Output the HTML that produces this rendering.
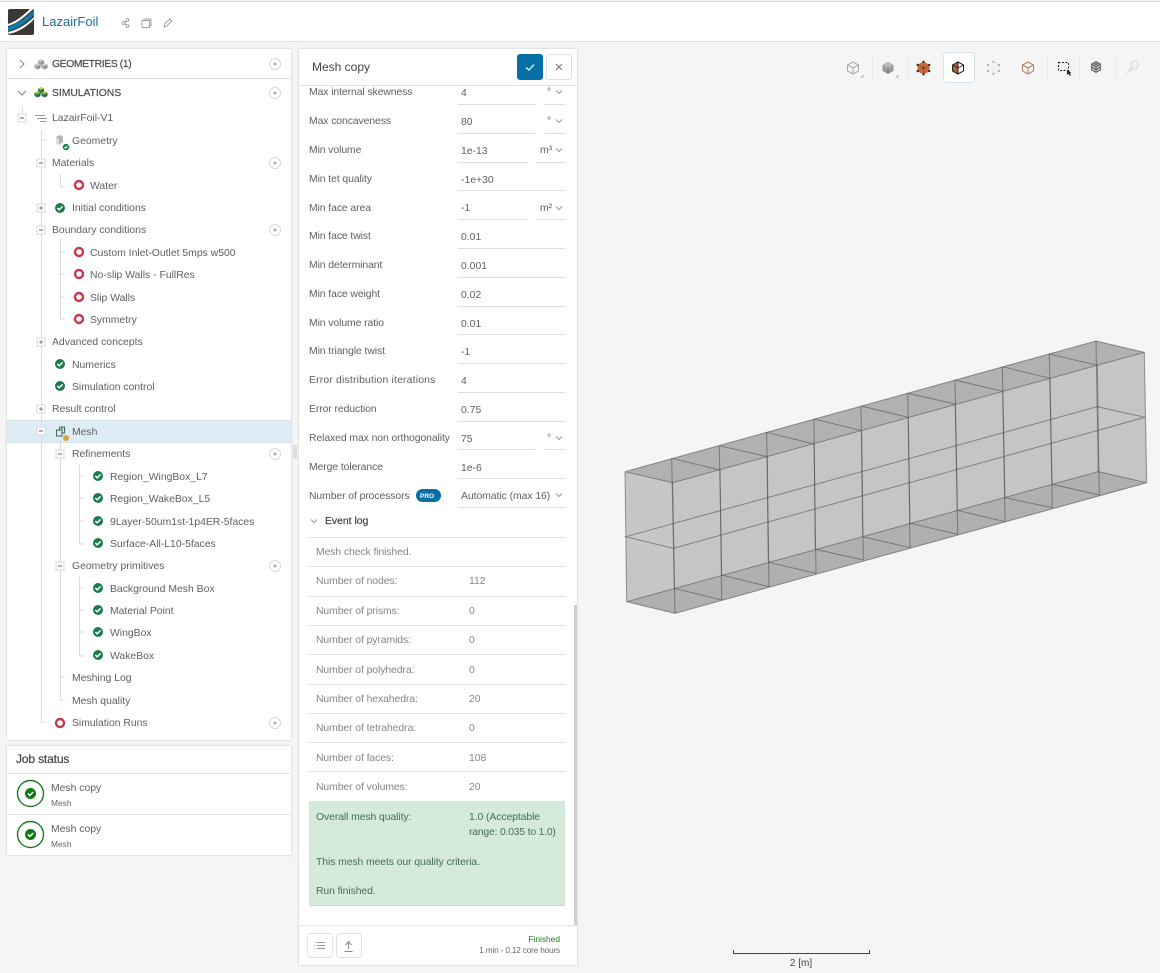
<!DOCTYPE html>
<html><head><meta charset="utf-8"><title>LazairFoil</title>
<style>
html,body{margin:0;padding:0;width:1160px;height:973px;overflow:hidden;background:#f5f5f5;font-family:"Liberation Sans",sans-serif}
.b{position:absolute;background:#fff;box-sizing:border-box}
.p{position:absolute;background:#fff;box-shadow:0 0 2px rgba(0,0,0,.22)}
svg.o{position:absolute;left:0;top:0}
.t{position:absolute;white-space:nowrap;font-size:10.4px;line-height:14px;color:#5f5f5f;margin-top:2px}
.h{font-size:10.4px;color:#4a4a4a;-webkit-text-stroke:.2px #4a4a4a}
.l{color:#5f5f5f;letter-spacing:-.08px}
.v{color:#5f5f5f;left:461px}
.e{color:#858585;left:316px;letter-spacing:-.08px}
.n{color:#858585;left:469px}
.g{color:#436f53;letter-spacing:-.08px}
</style></head><body>
<div class="b" style="left:0;top:1px;width:1160px;height:41px;border-top:1px solid #ddd;border-bottom:1px solid #dedede"></div>
<div class="p" style="left:7px;top:49px;width:284px;height:691px"></div>
<div class="p" style="left:7px;top:746px;width:284px;height:109px"></div>
<div class="b" style="left:7px;top:420px;width:284px;height:23px;background:#deedf4;border-top:1px solid #cfe2ec;border-bottom:1px solid #cfe2ec"></div>
<div class="p" style="left:299px;top:49px;width:278px;height:916px"></div>

<svg class="o" width="1160" height="973" viewBox="0 0 1160 973" fill="none">
<defs>
<g id="ok"><circle r="5" fill="#1d7b4d"/><path d="M-2.6 0L-.8 1.8L2.6-1.6" stroke="#fff" stroke-width="1.5"/></g>
<g id="ring"><circle r="4" stroke="#c8364a" stroke-width="2.4" fill="#fff"/></g>
<g id="add"><circle r="5.5" fill="#fff" stroke="#d8d8d8"/><path d="M-1.500 0H1.500M0-1.500V1.500" stroke="#777" stroke-width=".8"/></g>
<g id="min"><rect x="-4" y="-4" width="8" height="8" fill="#fff" stroke="#d8d8d8"/><path d="M-2 0H2" stroke="#666"/></g>
<g id="pls"><rect x="-4" y="-4" width="8" height="8" fill="#fff" stroke="#d8d8d8"/><path d="M-2 0H2M0-2V2" stroke="#666" stroke-width=".8"/></g>
<path id="cu" d="M0-6L5.5-3V3L0 6L-5.5 3V-3ZM-5.5-3L0 0L5.5-3M0 0V6"/>
<g id="chev"><path d="M-3-1.5L0 1.5L3-1.5" stroke="#999"/></g>
<g id="c1"><path d="M0-3L3-1.500L0 0L-3-1.500Z" fill="#d2d2d2"/><path d="M-3-1.500L0 0V3.500L-3 2Z" fill="#a6a6a6"/><path d="M3-1.500L0 0V3.500L3 2Z" fill="#8c8c8c"/></g>
<g id="c2"><path d="M0-3L3-1.500L0 0L-3-1.500Z" fill="#b9c84a"/><path d="M-3-1.500L0 0V3.500L-3 2Z" fill="#1f8a50"/><path d="M3-1.500L0 0V3.500L3 2Z" fill="#3a5f48"/></g>
</defs>

<!-- logo -->
<rect x="8" y="9" width="26" height="26" rx="2" fill="#3a3734"/>
<path d="M8 27C16 24 26 18 34 10V15C26 23 17 29 8 31Z" fill="#0f7cae"/>
<path d="M8 32C18 30 27 24 34 17V19C27 27 18 32 9 34Z" fill="#fff"/>
<path d="M8 24C15 22 24 15 30 9H33C25 17 16 24 8 26Z" fill="#fff"/>
<!-- top icons -->
<g stroke="#8a8a8a" fill="none" stroke-width=".8">
<circle cx="123.500" cy="23" r="1.500"/><circle cx="127.500" cy="20" r="1.400"/><circle cx="127.500" cy="26" r="1.400"/><path d="M125 22.500L126.300 21M125 23.500L126.300 25"/>
<rect x="142" y="20.500" width="7.500" height="7"/><path d="M144 20.500V19H151V26H149.500"/>
<path d="M164 27L164.800 23.800L169.700 19L171.700 21L166.800 25.900Z"/>
</g>
<!-- divider -->
<path d="M7 78.500H291" stroke="#e2e2e2"/>
<path d="M7 773.500H291M7 814.500H291" stroke="#e4e4e4"/>
<!-- chevrons -->
<path d="M20 60L24 64L20 68" stroke="#888"/>
<path d="M18 91L22 95L26 91" stroke="#888"/>
<!-- header cubes -->
<use href="#c1" x="41" y="62"/><use href="#c1" x="37.500" y="66"/><use href="#c1" x="44.500" y="66"/>
<use href="#c2" x="41" y="90"/><use href="#c2" x="37.500" y="94"/><use href="#c2" x="44.500" y="94"/>
<!-- tree lines -->
<g stroke="#dcdcdc" fill="none">
<path d="M22.500 107V113M41.500 130V722H47M41.500 140H47"/>
<path d="M60.500 174V187H65M60.500 238V319H65M60.500 252H65M60.500 274H65M60.500 297H65"/>
<path d="M60.500 440V700H65M60.500 677H65"/>
<path d="M79.500 465V544H84M79.500 476H84M79.500 498H84M79.500 521H84M79.500 577V656H84M79.500 588H84M79.500 610H84M79.500 632H84"/>
</g>
<use href="#min" x="22" y="118"/>
<path d="M35 115.500H45M37 118.500H47M40 121.500H46" stroke="#999"/>
<use href="#min" x="41" y="163"/><use href="#pls" x="41" y="208"/><use href="#min" x="41" y="230"/><use href="#pls" x="41" y="342"/><use href="#pls" x="41" y="409"/><use href="#min" x="41" y="431"/>
<use href="#min" x="60" y="454"/><use href="#min" x="60" y="566"/>
<!-- geometry icon -->
<path d="M56 137L60 135L63 136.500V142L59 145L56 143.500Z" fill="#b5b5b5"/><path d="M56 137L59 139V145L56 143.500Z" fill="#ddd"/>
<use href="#ok" transform="translate(66 147) scale(.65)"/>
<!-- mesh icon -->
<g stroke="#2f5f45" fill="none" stroke-width=".9"><path d="M59.500 427H64.500V433H62M59.500 427V430H56.500V436H62V430H59.500"/><path d="M61 428.500H63"/></g>
<circle cx="66" cy="438" r="3" fill="#d4a63a"/>
<!-- status icons -->
<use href="#ok" x="60" y="208"/><use href="#ok" x="60" y="364"/><use href="#ok" x="60" y="386"/>
<use href="#ring" x="60" y="723"/>
<use href="#ring" x="79" y="185"/><use href="#ring" x="79" y="252"/><use href="#ring" x="79" y="274"/><use href="#ring" x="79" y="297"/><use href="#ring" x="79" y="319"/>
<use href="#ok" x="98" y="476"/><use href="#ok" x="98" y="498"/><use href="#ok" x="98" y="521"/><use href="#ok" x="98" y="543"/>
<use href="#ok" x="98" y="588"/><use href="#ok" x="98" y="610"/><use href="#ok" x="98" y="632"/><use href="#ok" x="98" y="655"/>
<!-- add buttons -->
<use href="#add" x="275" y="64"/><use href="#add" x="275" y="93"/><use href="#add" x="275" y="163"/><use href="#add" x="275" y="230"/><use href="#add" x="275" y="454"/><use href="#add" x="275" y="566"/><use href="#add" x="275" y="723"/>
<!-- splitter -->
<rect x="293" y="445" width="4" height="14" rx="1" fill="#ddd"/>
<!-- job icons -->
<circle cx="30.500" cy="793.500" r="13" stroke="#1a7a1f" stroke-width="1.400"/><circle cx="30.500" cy="793.500" r="5.500" fill="#117a16"/><path d="M27.800 793.500L29.800 795.300L33.300 792" stroke="#fff" stroke-width="1.500"/>
<circle cx="30.500" cy="834.500" r="13" stroke="#1a7a1f" stroke-width="1.400"/><circle cx="30.500" cy="834.500" r="5.500" fill="#117a16"/><path d="M27.800 834.500L29.800 836.300L33.300 833" stroke="#fff" stroke-width="1.500"/>

<!-- mid panel -->
<path d="M299 85.500H577" stroke="#e2e2e2"/>
<rect x="517" y="54" width="26" height="26" rx="3" fill="#066fa6"/>
<path d="M526 67.500L529 70L534 64.500" stroke="#fff" stroke-width="1.200"/>
<rect x="546.500" y="54.500" width="25" height="25" rx="2" fill="#fff" stroke="#e0e0e0"/>
<path d="M556 64L562 70M562 64L556 70" stroke="#777"/>
<!-- form underlines -->
<g stroke="#dedede">
<path d="M458 104.500H535M545 104.500H565M458 133.500H535M545 133.500H565"/>
<path d="M458 162.500H528M536 162.500H565M458 190.500H565M458 219.500H528M536 219.500H565"/>
<path d="M458 248.500H565M458 277.500H565M458 306.500H565M458 334.500H565M458 363.500H565M458 392.500H565M458 421.500H565"/>
<path d="M458 449.500H535M545 449.500H565M458 478.500H565M458 507.500H565"/>
<path d="M309 537.500H565M309 566.500H565M309 596.500H565M309 625.500H565M309 654.500H565M309 684.500H565M309 713.500H565M309 742.500H565M309 771.500H565"/>
</g>
<use href="#chev" x="559" y="92"/><use href="#chev" x="559" y="121"/><use href="#chev" x="559" y="150"/><use href="#chev" x="559" y="208"/><use href="#chev" x="559" y="438"/><use href="#chev" x="559" y="495"/><use href="#chev" x="314" y="521"/>
<rect x="416" y="489" width="25" height="13" rx="6.500" fill="#066fa6"/>
<rect x="309" y="801" width="256" height="105" fill="#d4ebdc"/>
<path d="M309 905.500H565" stroke="#bfdcc9"/>
<rect x="574" y="605" width="3" height="320" fill="#cfcfcf"/>
<path d="M299 925.500H577" stroke="#e6e6e6"/>
<rect x="307.500" y="933.500" width="25" height="24" rx="3" fill="#fff" stroke="#e2e2e2"/>
<rect x="336.500" y="933.500" width="25" height="24" rx="3" fill="#fff" stroke="#e2e2e2"/>
<path d="M317 942.500H325M317 945.500H325M317 948.500H325" stroke="#999"/>
<path d="M314.500 942.500H315.500M314.500 945.500H315.500M314.500 948.500H315.500" stroke="#999"/>
<path d="M348.500 949V942M345.500 945L348.500 941.500L351.500 945M344.500 951.500H352.500" stroke="#888"/>

<!-- toolbar -->
<rect x="943.500" y="52.500" width="31" height="30" rx="3" fill="#fff" stroke="#d5e3ec"/>
<path d="M872.500 56V80M907.500 56V80M1047.500 56V80M1079.500 56V80M1115.500 56V80" stroke="#ececec"/>
<g fill="none">
<use href="#cu" transform="translate(853 68)" stroke="#999" stroke-width=".8"/>
<path d="M861 77H863V75" stroke="#aaa"/>
<g transform="translate(888 68)"><path d="M0-6L5.500-3V3L0 6L-5.500 3V-3Z" fill="#9a9a9a"/><path d="M-5.500-3L0 0L5.500-3L0-6Z" fill="#b5b5b5"/><path d="M0 0V6" stroke="#777"/></g>
<path d="M896 77H898V75" stroke="#aaa"/>
<g transform="translate(923.500 68)"><path d="M0-6.500L6-3.200V3.200L0 6.500L-6 3.200V-3.200Z" fill="#c9683a"/><path d="M-6-3.200L0 0L6-3.200M0 0V6.500" stroke="#8a4a2a" stroke-width=".7"/><g fill="#222"><circle cy="-6.300" r="1.100"/><circle cx="5.800" cy="-3.100" r="1.100"/><circle cx="5.800" cy="3.100" r="1.100"/><circle cy="6.300" r="1.100"/><circle cx="-5.800" cy="3.100" r="1.100"/><circle cx="-5.800" cy="-3.100" r="1.100"/><circle r="1"/></g></g>
<g transform="translate(958 68)"><path d="M0-6L5.500-3V3L0 6Z" fill="#fff" stroke="#222"/><path d="M0-6L-5.500-3V3L0 6Z" fill="#b85d34" stroke="#222"/><path d="M-5.500-3L0 0L5.500-3M0 0V6" stroke="#222" stroke-width=".8"/></g>
<g transform="translate(993.500 68)"><use href="#cu" stroke="#e6dcd4" stroke-width=".7"/><g fill="#b9a08f"><circle cy="-6" r="1"/><circle cx="5.500" cy="-3" r="1"/><circle cx="5.500" cy="3" r="1"/><circle cy="6" r="1"/><circle cx="-5.500" cy="3" r="1"/><circle cx="-5.500" cy="-3" r="1"/></g></g>
<use href="#cu" transform="translate(1028 68)" stroke="#b97a5c" stroke-width="1"/>
<rect x="1058.500" y="62.500" width="10" height="8" stroke="#222" stroke-dasharray="2 1.500"/>
<path d="M1067 69.500V75L1068.500 73.800L1070 76L1071 75.300L1069.800 73.300L1071.500 73Z" fill="#222"/>
<g transform="translate(1096 67)" stroke="#5f5f5f" stroke-width=".9"><path d="M0-5.500L4.500-3V3L0 5.500L-4.500 3V-3Z" fill="#bbb"/><path d="M-4.500-3L0 0L4.500-3M0 0V5.500M-4.500 0L0 2.500L4.500 0M-2.200-4.300L2.200-1.500M2.200-4.300L-2.200-1.500"/></g>
<circle cx="1134.500" cy="65" r="3.800" stroke="#dedede" stroke-width="1.500"/><path d="M1132 68L1127 73" stroke="#dedede" stroke-width="2.500"/>
</g>

<!-- mesh body -->
<polygon points="625,471.700 672.700,482.700 675,613.300 626.700,601.700" fill="#c6c6c6"/>
<polygon points="672.700,482.700 1144.300,352.300 1146.700,482.700 675,613.300" fill="#c5c5c5"/>
<polygon points="625,471.700 1096,341 1144.300,352.300 672.700,482.700" fill="#b1b1b1"/>
<polygon points="626.700,601.700 1098.300,471.700 1146.700,482.700 675,613.300" fill="#b0b0b0"/>
<g stroke="#484848" stroke-opacity=".55" stroke-width="1" fill="none">
<path d="M625 471.700L1096 341L1144.300 352.300L672.700 482.700Z"/>
<path d="M626.700 601.700L1098.300 471.700L1146.700 482.700L675 613.300Z"/>
<path d="M625.700 536.700L1097.300 406.700L1145 417.300L673.300 548.300Z"/>
<path d="M625 471.700L626.700 601.700M1144.300 352.300L1146.700 482.700M1096 341L1098.300 471.700"/>
<path d="M671.700 458.300L674.300 588.300M719.300 445.700L721.700 575M766.700 432.300L768.300 562.300M814 419L815.300 549.300M861 406L862.700 536.700M907.700 393.300L910 523.300M955 380L957.300 510.300M1002.300 366.700L1005 497.700M1049.300 354L1052 484.300"/>
<path d="M672.700 482.700L675 613.300M720 470L721.700 600M767.300 456.700L769 586.700M814 444L816 573.300M861.700 430.700L863.300 560M908.300 417.300L910 547.700M955.300 404L957.700 534.300M1002.700 391.300L1005 521.700M1050 378.300L1052.300 507.700M1097.300 365.300L1099.300 495"/>
<path d="M671.700 458.300L720 470M719.300 445.700L767.300 456.700M766.700 432.300L814 444M814 419L861.700 430.700M861 406L908.300 417.300M907.700 393.300L955.300 404M955 380L1002.700 391.300M1002.300 366.700L1050 378.300M1049.300 354L1097.300 365.300"/>
<path d="M674.300 588.300L721.700 600M721.700 575L769 586.700M768.300 562.300L816 573.300M815.300 549.300L863.300 560M862.700 536.700L910 547.700M910 523.300L957.700 534.300M957.300 510.300L1005 521.700M1005 497.700L1052.300 507.700M1052 484.300L1099.300 495"/>
</g>
<!-- scale -->
<path d="M733.500 950V953.500H869.500V950" stroke="#444"/>
</svg>

<!-- top bar -->
<div class="t" style="left:42px;top:14px;margin:0;font-size:13px;line-height:16px;color:#1a6f96">LazairFoil</div>
<!-- tree -->
<div class="t h" style="left:52px;top:56px;letter-spacing:-.4px">GEOMETRIES (1)</div>
<div class="t h" style="left:52px;top:85px;letter-spacing:-.05px">SIMULATIONS</div>
<div class="t" style="left:52px;top:110px">LazairFoil-V1</div>
<div class="t" style="left:72px;top:133px">Geometry</div>
<div class="t" style="left:52px;top:155px">Materials</div>
<div class="t" style="left:90px;top:178px">Water</div>
<div class="t" style="left:72px;top:200px">Initial conditions</div>
<div class="t" style="left:52px;top:222px">Boundary conditions</div>
<div class="t" style="left:90px;top:245px">Custom Inlet-Outlet 5mps w500</div>
<div class="t" style="left:90px;top:267px">No-slip Walls - FullRes</div>
<div class="t" style="left:90px;top:290px">Slip Walls</div>
<div class="t" style="left:90px;top:312px">Symmetry</div>
<div class="t" style="left:52px;top:334px">Advanced concepts</div>
<div class="t" style="left:72px;top:357px">Numerics</div>
<div class="t" style="left:72px;top:379px">Simulation control</div>
<div class="t" style="left:52px;top:401px">Result control</div>
<div class="t" style="left:72px;top:424px">Mesh</div>
<div class="t" style="left:72px;top:446px">Refinements</div>
<div class="t" style="left:110px;top:469px">Region_WingBox_L7</div>
<div class="t" style="left:110px;top:491px">Region_WakeBox_L5</div>
<div class="t" style="left:110px;top:514px">9Layer-50um1st-1p4ER-5faces</div>
<div class="t" style="left:110px;top:536px">Surface-All-L10-5faces</div>
<div class="t" style="left:72px;top:558px">Geometry primitives</div>
<div class="t" style="left:110px;top:581px">Background Mesh Box</div>
<div class="t" style="left:110px;top:603px">Material Point</div>
<div class="t" style="left:110px;top:625px">WingBox</div>
<div class="t" style="left:110px;top:648px">WakeBox</div>
<div class="t" style="left:72px;top:670px">Meshing Log</div>
<div class="t" style="left:72px;top:693px">Mesh quality</div>
<div class="t" style="left:72px;top:715px">Simulation Runs</div>
<!-- job -->
<div class="t" style="left:16px;top:752px;margin:0;font-size:12px;letter-spacing:-.15px;color:#444;-webkit-text-stroke:.2px #444">Job status</div>
<div class="t" style="left:51px;top:780px">Mesh copy</div>
<div class="t" style="left:51px;top:796px;margin:0;font-size:8.400px;color:#666">Mesh</div>
<div class="t" style="left:51px;top:821px">Mesh copy</div>
<div class="t" style="left:51px;top:837px;margin:0;font-size:8.400px;color:#666">Mesh</div>
<!-- mid header -->
<div class="t" style="left:312px;top:60px;margin:0;font-size:12px;color:#444">Mesh copy</div>
<!-- form -->
<div class="t l" style="left:309px;top:84px">Max internal skewness</div><div class="t v" style="top:85px">4</div><div class="t v" style="left:547px;top:84px">°</div>
<div class="t l" style="left:309px;top:113px">Max concaveness</div><div class="t v" style="top:114px">80</div><div class="t v" style="left:547px;top:113px">°</div>
<div class="t l" style="left:309px;top:142px">Min volume</div><div class="t v" style="top:143px">1e-13</div><div class="t v" style="left:540px;top:142px">m³</div>
<div class="t l" style="left:309px;top:171px">Min tet quality</div><div class="t v" style="top:172px">-1e+30</div>
<div class="t l" style="left:309px;top:200px">Min face area</div><div class="t v" style="top:200px">-1</div><div class="t v" style="left:540px;top:200px">m²</div>
<div class="t l" style="left:309px;top:228px">Min face twist</div><div class="t v" style="top:229px">0.01</div>
<div class="t l" style="left:309px;top:257px">Min determinant</div><div class="t v" style="top:258px">0.001</div>
<div class="t l" style="left:309px;top:286px">Min face weight</div><div class="t v" style="top:287px">0.02</div>
<div class="t l" style="left:309px;top:315px">Min volume ratio</div><div class="t v" style="top:316px">0.01</div>
<div class="t l" style="left:309px;top:343px">Min triangle twist</div><div class="t v" style="top:344px">-1</div>
<div class="t l" style="left:309px;top:372px;letter-spacing:.18px">Error distribution iterations</div><div class="t v" style="top:373px">4</div>
<div class="t l" style="left:309px;top:401px">Error reduction</div><div class="t v" style="top:402px">0.75</div>
<div class="t l" style="left:309px;top:430px">Relaxed max non orthogonality</div><div class="t v" style="top:431px">75</div><div class="t v" style="left:547px;top:430px">°</div>
<div class="t l" style="left:309px;top:459px">Merge tolerance</div><div class="t v" style="top:460px">1e-6</div>
<div class="t l" style="left:309px;top:488px">Number of processors</div><div class="t" style="left:420px;top:490px;margin:0;font-size:6.500px;line-height:13px;color:#fff;font-weight:bold">PRO</div><div class="t v" style="top:488px;letter-spacing:-.05px">Automatic (max 16)</div>
<div class="t" style="left:325px;top:514px;margin-top:1px;color:#444;-webkit-text-stroke:.2px #444">Event log</div>
<div class="t e" style="top:544px">Mesh check finished.</div>
<div class="t e" style="top:573px">Number of nodes:</div><div class="t n" style="top:573px">112</div>
<div class="t e" style="top:603px">Number of prisms:</div><div class="t n" style="top:603px">0</div>
<div class="t e" style="top:632px">Number of pyramids:</div><div class="t n" style="top:632px">0</div>
<div class="t e" style="top:662px">Number of polyhedra:</div><div class="t n" style="top:662px">0</div>
<div class="t e" style="top:691px">Number of hexahedra:</div><div class="t n" style="top:691px">20</div>
<div class="t e" style="top:720px">Number of tetrahedra:</div><div class="t n" style="top:720px">0</div>
<div class="t e" style="top:750px">Number of faces:</div><div class="t n" style="top:750px">108</div>
<div class="t e" style="top:779px">Number of volumes:</div><div class="t n" style="top:779px">20</div>
<div class="t g" style="left:316px;top:809px">Overall mesh quality:</div><div class="t g" style="left:469px;top:809px">1.0 (Acceptable</div>
<div class="t g" style="left:469px;top:824px;letter-spacing:-.2px">range: 0.035 to 1.0)</div>
<div class="t g" style="left:316px;top:854px">This mesh meets our quality criteria.</div>
<div class="t g" style="left:316px;top:883px">Run finished.</div>
<div class="t" style="right:600px;top:932px;margin:0;font-size:8.400px;color:#1b7a1f">Finished</div>
<div class="t" style="right:600px;top:944px;margin:0;font-size:8.200px;letter-spacing:-.15px;color:#666">1 min - 0.12 core hours</div>
<div class="t" style="left:733px;width:136px;text-align:center;top:956px;margin-top:1px;font-size:10px;color:#444">2 [m]</div>
</body></html>
